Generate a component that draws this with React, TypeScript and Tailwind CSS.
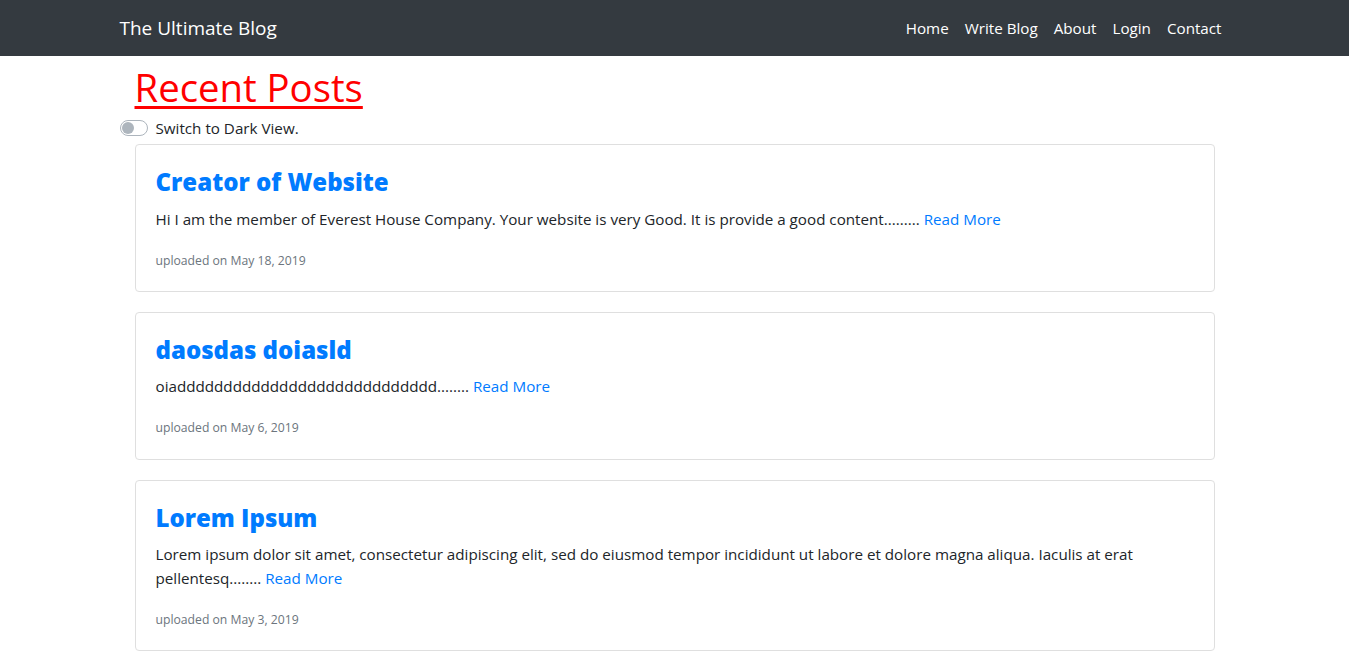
import { useState } from "react"

type Post = { title: string; body: string; date: string }

const posts: Post[] = [
  {
    title: "Creator of Website",
    body: "Hi I am the member of Everest House Company. Your website is very Good. It is provide a good content.........",
    date: "May 18, 2019",
  },
  {
    title: "daosdas doiasld",
    body: "oiadddddddddddddddddddddddddddd........",
    date: "May 6, 2019",
  },
  {
    title: "Lorem Ipsum",
    body: "Lorem ipsum dolor sit amet, consectetur adipiscing elit, sed do eiusmod tempor incididunt ut labore et dolore magna aliqua. Iaculis at erat pellentesq........",
    date: "May 3, 2019",
  },
]

const links = ["Home", "Write Blog", "About", "Login", "Contact"]

export default function App() {
  const [dark, setDark] = useState(false)

  return (
    <div className="min-h-screen bg-white text-[#212529] font-['Open_Sans',sans-serif] text-[15.2px] leading-6">
      <nav className="h-14 bg-[#343a40]">
        <div className="mx-auto flex h-full w-[1140px] items-center justify-between px-[15px]">
          <a href="#" className="text-[19px] text-white">The Ultimate Blog</a>
          <ul className="flex">
            {links.map((l) => (
              <li key={l}>
                <a href="#" className="block px-2 py-2 text-white">{l}</a>
              </li>
            ))}
          </ul>
        </div>
      </nav>

      <div className="mx-auto w-[1140px] px-[15px]">
        <h1 className="mx-[15px] mt-[7px] mb-[5px] text-[38.3px] leading-[48px] font-normal text-[#ff0000] underline underline-offset-[4px] decoration-[3px]">
          Recent Posts
        </h1>

        <label className="flex items-center gap-2 cursor-pointer">
          <button
            onClick={() => setDark(!dark)}
            className={`relative h-4 w-7 rounded-full border ${dark ? "border-[#007bff] bg-[#007bff]" : "border-[#adb5bd] bg-white"}`}
          >
            <span
              className={`absolute top-[1px] h-3 w-3 rounded-full ${dark ? "left-[13px] bg-white" : "left-[1px] bg-[#adb5bd]"}`}
            />
          </button>
          <span>Switch to Dark View.</span>
        </label>

        <div className="mx-[15px] mt-1 flex flex-col gap-5">
          {posts.map((p) => (
            <div key={p.title} className="rounded border border-[#dfdfdf] px-5 pt-5 pb-[21px]">
              <h3 className="mb-2 text-[24px] leading-[33.6px] font-extrabold text-[#007bff]">{p.title}</h3>
              <p className="mb-5">
                {p.body} <a href="#" className="text-[#007bff]">Read More</a>
              </p>
              <small className="block text-[12.2px] leading-[19.2px] text-[#6c757d]">uploaded on {p.date}</small>
            </div>
          ))}
        </div>
      </div>
    </div>
  )
}
